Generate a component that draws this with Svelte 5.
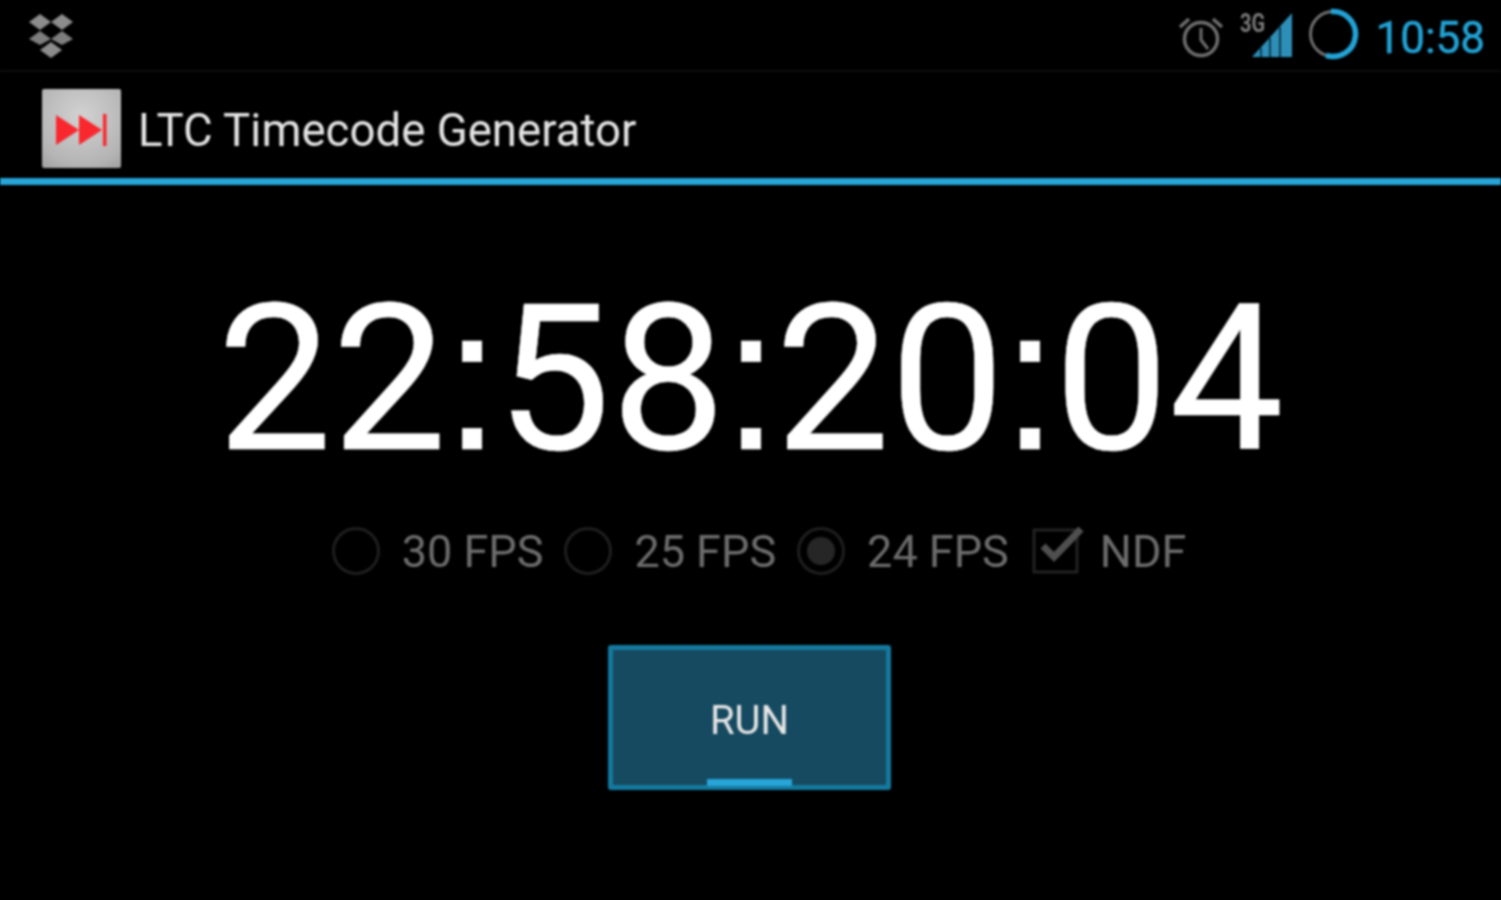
<script lang="ts">
	const rates = [
		{ label: '30 FPS', checked: false },
		{ label: '25 FPS', checked: false },
		{ label: '24 FPS', checked: true }
	];
</script>

<div class="screen">
	<header class="status">
		<svg class="dropbox" viewBox="0 0 48 46" width="48" height="46">
			<g fill="#8c8c8c">
				<path d="M13 1 24 9 13 17 2 9z" />
				<path d="M35 1 46 9 35 17 24 9z" />
				<path d="M13 18 24 26 13 32 2 26z" opacity="0.9" />
				<path d="M35 18 46 26 35 32 24 26z" opacity="0.9" />
				<path d="M24 29 35 37 24 45 13 37z" />
			</g>
		</svg>
		<div class="tray">
			<svg viewBox="0 0 48 48" width="48" height="48" class="alarm">
				<g fill="none" stroke="#6e6e6e">
					<circle cx="24" cy="26" r="16.5" stroke-width="3.5" />
					<path d="M24 15v12l7 9" stroke-width="3" />
					<path d="M3 14 12 6M45 14 36 6" stroke-width="3.5" />
				</g>
			</svg>
			<div class="signal">
				<span class="net">3G</span>
				<svg viewBox="0 0 42 46" width="42" height="46">
					<path d="M1 45 41 1v44z" fill="#2d8fb8" />
					<path d="M10 36v9M19 26v19M29 15v30" stroke="#0b3a4d" stroke-width="2" />
				</svg>
			</div>
			<svg viewBox="0 0 52 52" width="52" height="52" class="battery">
				<circle cx="26" cy="26" r="22.5" fill="none" stroke="#6e6e6e" stroke-width="3" />
				<path d="M24 3.6A22.5 22.5 0 1 1 19 47.4" fill="none" stroke="#22a3d6" stroke-width="5.5" />
			</svg>
			<span class="clock">10:58</span>
		</div>
	</header>

	<div class="actionbar">
		<div class="appicon">
			<svg viewBox="0 0 54 34" width="54" height="34">
				<path d="M1 2 24 17 1 32zM24 2 47 17 24 32z" fill="#f9282f" />
				<rect x="48" y="1" width="3.5" height="32" fill="#f9282f" />
			</svg>
		</div>
		<h1>LTC Timecode Generator</h1>
	</div>

	<main>
		<div class="timecode">22<span class="colon">:</span>58<span class="colon">:</span>20<span class="colon">:</span>04</div>

		<div class="options">
			{#each rates as rate}
				<div class="option">
					<span class="radio" class:checked={rate.checked}></span>
					<span class="label">{rate.label}</span>
				</div>
			{/each}
			<div class="option">
				<svg class="check" viewBox="0 0 54 50" width="54" height="50">
					<rect x="2" y="6" width="43" height="42" fill="none" stroke="#222" stroke-width="3" />
					<path d="M11 22 22 33 49 5" fill="none" stroke="#4f4f4f" stroke-width="7" />
				</svg>
				<span class="label">NDF</span>
			</div>
		</div>

		<button class="run">RUN</button>
	</main>
</div>

<style>
	:global(body) {
		background: #000;
	}

	.screen {
		width: 1501px;
		height: 900px;
		overflow: hidden;
		background: #000;
		color: #fff;
		font-family: Roboto, 'Liberation Sans', sans-serif;
		display: flex;
		flex-direction: column;
		filter: blur(0.9px);
	}

	.status {
		height: 72px;
		box-sizing: border-box;
		border-bottom: 2px solid #0d0d0d;
		padding: 2px 16px 0 27px;
		display: flex;
		justify-content: space-between;
		align-items: center;
		flex: none;
	}

	.tray {
		display: flex;
		align-items: center;
	}

	.alarm {
		margin-right: 15px;
		margin-top: 2px;
	}

	.signal {
		position: relative;
		width: 53px;
		height: 46px;
		display: flex;
		justify-content: flex-end;
		margin-right: 14px;
		margin-top: -2px;
	}

	.net {
		position: absolute;
		left: 0;
		top: -3px;
		font-size: 25px;
		font-weight: 700;
		color: #7a7a7a;
		transform: scaleX(0.8);
		transform-origin: left;
	}

	.battery {
		margin-right: 16px;
		margin-top: -4px;
	}

	.clock {
		font-size: 44px;
		color: #22a3d6;
		line-height: 1;
		margin-top: 4px;
		-webkit-text-stroke: 0.5px #22a3d6;
	}

	.actionbar {
		height: 106px;
		box-sizing: border-box;
		padding-left: 42px;
		display: flex;
		align-items: center;
		gap: 17px;
		flex: none;
	}

	.appicon {
		width: 79px;
		height: 79px;
		border-radius: 2px;
		background: radial-gradient(circle at 50% 35%, #d2d2d2, #b4b4b4 75%, #a0a0a0);
		display: flex;
		align-items: center;
		justify-content: center;
		margin-top: 6px;
	}

	.appicon svg {
		margin-top: 4px;
	}

	h1 {
		margin: 10px 0 0;
		font-size: 45.6px;
		font-weight: 400;
		color: #e4e4e4;
	}

	main {
		flex: 1;
		border-top: 7px solid #27a5d8;
		display: flex;
		flex-direction: column;
		align-items: center;
	}

	.timecode {
		font-size: 204px;
		line-height: 240px;
		margin-top: 73px;
		white-space: nowrap;
		-webkit-text-stroke: 0.5px #fff;
	}

	.colon {
		font-family: 'Liberation Sans', sans-serif;
		margin-left: -3px;
		letter-spacing: -4px;
	}

	.options {
		display: flex;
		align-items: center;
		margin-top: 21px;
		height: 60px;
		margin-left: 17px;
	}

	.option {
		display: flex;
		align-items: center;
		margin-right: 21px;
	}

	.option:last-child {
		margin-right: 0;
	}

	.radio {
		width: 48px;
		height: 48px;
		border: 3px solid #1f1f1f;
		border-radius: 50%;
		box-sizing: border-box;
		display: flex;
		align-items: center;
		justify-content: center;
		margin-right: 22px;
	}

	.radio.checked::after {
		content: '';
		width: 28px;
		height: 28px;
		border-radius: 50%;
		background: #262626;
	}

	.check {
		margin-left: 2px;
		margin-right: 14px;
		margin-bottom: 4px;
	}

	.label {
		font-size: 45px;
		color: #6c6c6c;
	}

	.run {
		position: relative;
		margin-top: 64px;
		margin-right: 2px;
		width: 283px;
		height: 145px;
		box-sizing: border-box;
		background: #164a60;
		border: 5px solid #14799f;
		border-radius: 3px;
		color: #e6e6e6;
		font-family: inherit;
		font-size: 40px;
		padding: 6px 0 0;
	}

	.run::after {
		content: '';
		position: absolute;
		left: 94px;
		bottom: -1px;
		width: 85px;
		height: 7px;
		background: #27a5d8;
	}
</style>
